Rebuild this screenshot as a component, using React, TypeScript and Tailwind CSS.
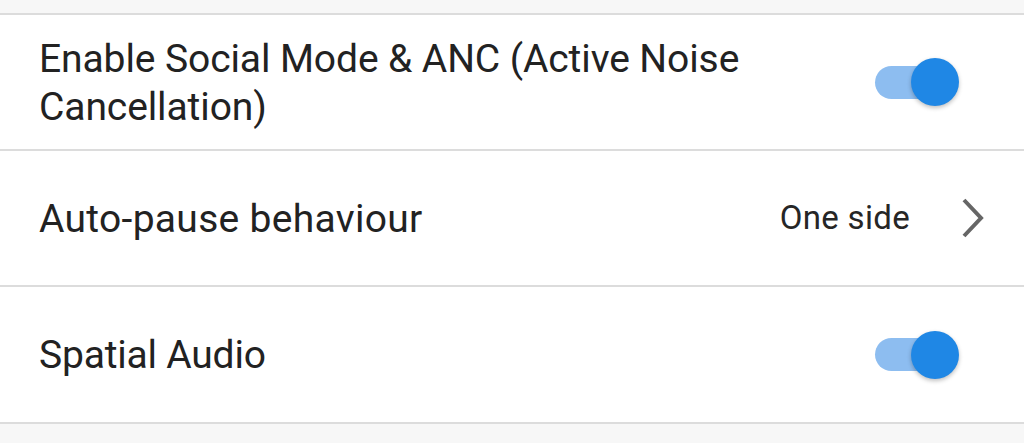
import React from "react";

function Toggle() {
  return (
    <div className="relative w-[90px] h-[48px] flex items-center shrink-0">
      <div className="absolute left-[3px] w-[72px] h-[33px] rounded-full bg-[#8dbdf0]" />
      <div className="absolute left-[39px] w-[48px] h-[48px] rounded-full bg-[#1f87e5] shadow-[0_2px_4px_rgba(0,0,0,0.25)]" />
    </div>
  );
}

export default function App() {
  const font = { fontFamily: "Roboto, 'Noto Sans', sans-serif" };
  return (
    <div className="w-[1024px] h-[443px] bg-[#f7f7f7] overflow-hidden text-[#222222]" style={font}>
      <div className="h-[13px]" />
      <div className="border-t-2 border-[#dcdcdc] bg-white">
        <div className="h-[134px] flex items-center pl-[39px] pr-[62px]">
          <div className="flex-1 text-[39px] leading-[48px] tracking-[-0.1px] pr-[100px] pt-[2px]">
            Enable Social Mode &amp; ANC (Active Noise Cancellation)
          </div>
          <Toggle />
        </div>
        <div className="h-[2px] bg-[#dcdcdc]" />
        <div className="h-[134px] flex items-center pl-[39px] pr-[38px]">
          <div className="flex-1 text-[39px] tracking-[0.3px] pt-[2px]">Auto-pause behaviour</div>
          <div className="text-[33px] tracking-[0.3px] text-[#262626] mr-[50px]">One side</div>
          <svg width="26" height="42" viewBox="0 0 26 42" className="shrink-0">
            <path d="M4 3 L21 21 L4 39" fill="none" stroke="#666666" strokeWidth="4" />
          </svg>
        </div>
        <div className="h-[2px] bg-[#dcdcdc]" />
        <div className="h-[135px] flex items-center pl-[39px] pr-[62px]">
          <div className="flex-1 text-[39px] tracking-[-0.2px] pt-[2px]">Spatial Audio</div>
          <Toggle />
        </div>
      </div>
      <div className="h-[2px] bg-[#dcdcdc]" />
    </div>
  );
}
